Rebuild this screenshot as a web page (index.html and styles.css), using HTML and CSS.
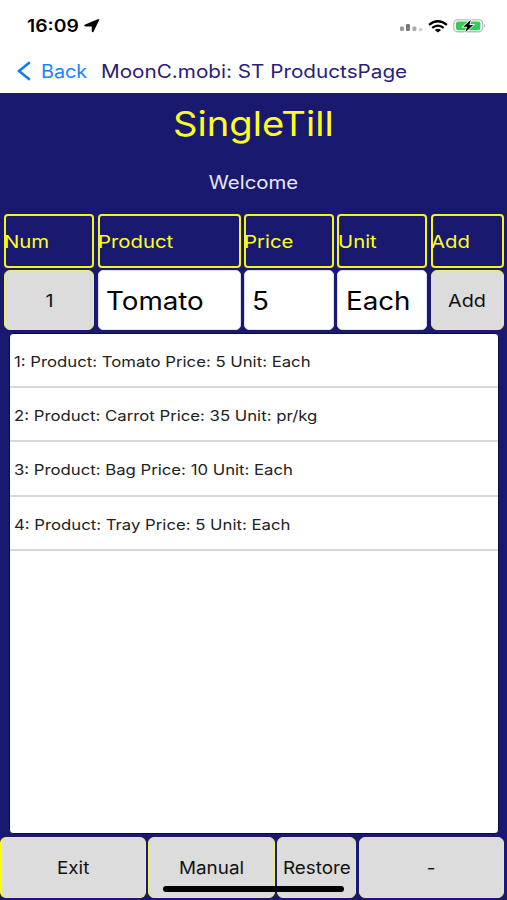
FILE: index.html
```html
<!DOCTYPE html>
<html lang="en">
<head>
<meta charset="utf-8">
<title>ST ProductsPage</title>
<link rel="stylesheet" href="styles.css">
</head>
<body>
<div class="screen">
  <header class="top">
    <div class="status">
      <span class="t time">16:09</span>
      <svg class="arrow" width="16" height="14" viewBox="0 0 16 14"><path d="M15.4.8 9.6 12.8Q8.4 14.2 7.8 12.4V7.6H1.4Q-.8 6.6 1.2 5.4L13.8.2Q15.8-.2 15.4.8Z"/></svg>
      <svg class="signal" width="24" height="8" viewBox="0 0 24 8"><rect x="0" y="2.5" width="4" height="4.5" rx="1.2" fill="#999"/><rect x="6" y="0" width="4" height="7" rx="1.2" fill="#777"/><rect x="12.5" y="2.5" width="4" height="4.5" rx="1.2" fill="#aaa"/><rect x="18.8" y="4.3" width="4" height="2.7" rx="1.2" fill="#ccc"/></svg>
      <svg class="wifi" width="20" height="13" viewBox="0 0 20 13"><g fill="none" stroke="#000" stroke-width="2.3"><path d="M1 4.8Q10-2.4 19 4.8"/><path d="M4.2 8Q10 3.2 15.8 8"/></g><path d="M6.8 10Q10 7.4 13.2 10L10 12.6Z"/></svg>
      <svg class="battery" width="34" height="14" viewBox="0 0 34 14"><rect x=".8" y=".8" width="29" height="12" rx="3.8" fill="#fff" stroke="#bbb" stroke-width="1.3"/><rect x="3" y="2.5" width="24.6" height="8.8" rx="2.2" fill="#34ca5c"/><path d="M31.2 4.8Q33 6.8 31.2 8.8Z" fill="#999"/><path d="M18 .8 10.4 7.8H14.2L12.4 13.2 20.4 5.9H16.4Z" stroke="#fff" stroke-width="1.6" paint-order="stroke"/></svg>
    </div>
    <nav class="nav">
      <svg class="chevron" width="14" height="20" viewBox="0 0 14 20"><path d="M12.8 1.2 2 10 12.8 18.8" fill="none" stroke="#0a7aff" stroke-width="2.5"/></svg>
      <span class="t back">Back</span>
      <span class="t page-title">MoonC.mobi: ST ProductsPage</span>
    </nav>
  </header>
  <main class="body">
    <h1 class="brand"><span class="t">SingleTill</span></h1>
    <p class="welcome"><span class="t">Welcome</span></p>
    <div class="row heads">
      <div class="head"><span class="t">Num</span></div>
      <div class="head"><span class="t">Product</span></div>
      <div class="head"><span class="t">Price</span></div>
      <div class="head"><span class="t">Unit</span></div>
      <div class="head"><span class="t">Add</span></div>
    </div>
    <div class="row inputs">
      <div class="button"><span class="t">1</span></div>
      <div class="field"><span class="t">Tomato</span></div>
      <div class="field"><span class="t">5</span></div>
      <div class="field"><span class="t">Each</span></div>
      <div class="button"><span class="t">Add</span></div>
    </div>
    <ul class="list">
      <li><span class="t">1: Product: Tomato Price: 5 Unit: Each</span></li>
      <li><span class="t">2: Product: Carrot Price: 35 Unit: pr/kg</span></li>
      <li><span class="t">3: Product: Bag Price: 10 Unit: Each</span></li>
      <li><span class="t">4: Product: Tray Price: 5 Unit: Each</span></li>
    </ul>
    <footer class="actions">
      <div class="button exit"><span class="t">Exit</span></div>
      <div class="button"><span class="t">Manual</span></div>
      <div class="button"><span class="t">Restore</span></div>
      <div class="button"><span class="t">-</span></div>
    </footer>
  </main>
  <div class="home"></div>
</div>
</body>
</html>
```
FILE: styles.css
```css
* { box-sizing: border-box; }
body { margin: 0; font-family: Inter, "Liberation Sans", sans-serif; color: #111; }
.screen { position: relative; width: 507px; height: 900px; display: flex; flex-direction: column; overflow: hidden; background: #191970; }
.t { display: inline-block; white-space: nowrap; transform: scaleX(1.15); transform-origin: left center; }

.top { height: 93px; background: #fff; }
.status { display: flex; align-items: center; height: 50px; padding: 2px 20px 0 27px; }
.time { width: 57px; font-size: 16.8px; font-weight: 600; color: #000; }
.signal { margin: 4px 0 0 300px; }
.wifi { margin-left: 5px; }
.battery { margin-left: 5px; }
.nav { display: flex; align-items: center; height: 41px; padding-left: 17px; }
.nav .t { font-size: 18.3px; }
.chevron { margin-right: 10px; }
.nav .back { width: 60px; color: #1683ff; transform: scaleX(1.08); }
.nav .page-title { color: #28207a; transform: scaleX(1.132); }

.body { flex: 1; display: flex; flex-direction: column; }
.brand { margin: 0; height: 61px; font-size: 34.4px; font-weight: 400; line-height: 61px; text-align: center; color: #ffff20; }
.welcome { margin: 0; height: 60px; font-size: 18px; line-height: 57px; text-align: center; color: #e8e8fa; }
.brand .t, .welcome .t, .button .t { transform-origin: center; }
.brand .t { transform: scaleX(1.11); }
.welcome .t { transform: scaleX(1.13); }

.row { display: grid; grid-template-columns: 90px 143px 90px 90px 73px; column-gap: 3.4px; padding-left: 4.2px; }
.heads { height: 54px; margin-bottom: 2px; }
.head { display: flex; align-items: center; border: 2px solid #f4f424; border-radius: 4px; font-size: 17.7px; color: #ffff20; }
.head .t { margin-left: -1.8px; }
.inputs { height: 60px; }
.field { display: flex; align-items: center; padding: 1px 0 0 7.5px; border: 1px solid #ddddf4; border-radius: 5px; background: #fff; font-size: 25px; color: #000; }
.field .t { transform: scaleX(1.11); }
.button { display: flex; align-items: center; justify-content: center; border: 1.5px solid #f0f060; border-radius: 6px; background: #dcdcdc; font-size: 17.7px; }
.inputs .button .t { transform: scaleX(1.12); }

.list { height: 501px; margin: 3px 8px 3px 9px; padding: 0; list-style: none; border: 1px solid #0c0c38; border-radius: 4px; background: #fff; font-size: 14.4px; color: #222; }
.list li { display: flex; align-items: center; height: 54.2px; padding: 3px 0 0 4px; border-bottom: 2px solid #d8d8da; }
.list .t { transform: scaleX(1.162); }
.actions { display: grid; grid-template-columns: 146px 127px 79px 145px; column-gap: 2.2px; height: 61px; }
.actions .t { transform: scaleX(1.065); }
.actions .exit { border-left: 2px solid #ff0; }
.home { position: absolute; left: 163px; top: 886px; width: 181px; height: 6px; border-radius: 3px; background: #000; }
```
